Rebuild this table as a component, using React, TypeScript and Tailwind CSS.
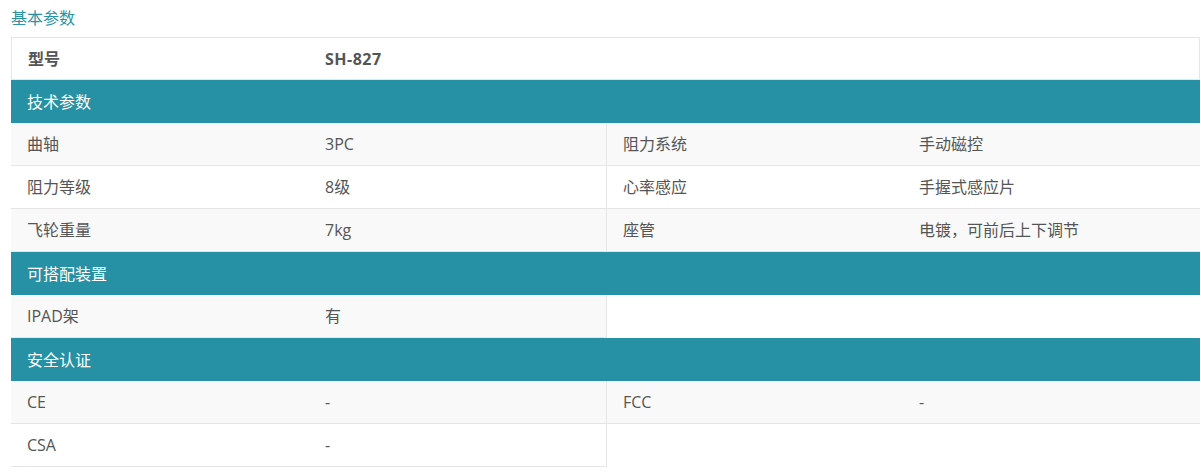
import React from "react";

type Cell = { label: string; value: string } | null;

const font = { fontFamily: '"Open Sans", "Noto Sans CJK SC", sans-serif' };

function Half({ cell, side, bg }: { cell: Cell; side: "l" | "r"; bg: string }) {
  if (!cell) {
    return <div className={side === "l" ? "h-[43px] border-r border-b border-[#e6e6e6] bg-white" : "h-[43px] bg-white"} />;
  }
  return (
    <div
      className={
        (side === "l" ? "border-r " : "") +
        "h-[43px] border-b border-[#e6e6e6] flex items-center " +
        bg
      }
    >
      <div className={(side === "l" ? "w-[298px]" : "w-[296px]") + " pl-4 shrink-0"}>{cell.label}</div>
      <div className="pl-4">{cell.value}</div>
    </div>
  );
}

function Row({ l, r, bg }: { l: Cell; r: Cell; bg: string }) {
  return (
    <div className="grid grid-cols-[596px_593px]">
      <Half cell={l} side="l" bg={bg} />
      {r ? <Half cell={r} side="r" bg={bg} /> : <div className="h-[43px] bg-white" />}
    </div>
  );
}

function Header({ title }: { title: string }) {
  return <div className="h-[43px] bg-[#2690a4] text-white flex items-center pl-4">{title}</div>;
}

export default function App() {
  return (
    <div className="bg-white min-h-[476px] text-[16px] text-[#555]" style={font}>
      <div className="pl-[11px] w-[1200px]">
        <div className="h-[37px] flex items-center text-[#2b93a6] pb-[1px]">基本参数</div>
        <div className="h-[43px] border border-[#e6e6e6] flex items-center font-bold text-[#555]">
          <div className="w-[297px] pl-4 shrink-0">型号</div>
          <div className="pl-4 tracking-[0.5px]">SH-827</div>
        </div>
        <Header title="技术参数" />
        <Row l={{ label: "曲轴", value: "3PC" }} r={{ label: "阻力系统", value: "手动磁控" }} bg="bg-[#f9f9f9]" />
        <Row l={{ label: "阻力等级", value: "8级" }} r={{ label: "心率感应", value: "手握式感应片" }} bg="bg-white" />
        <Row l={{ label: "飞轮重量", value: "7kg" }} r={{ label: "座管", value: "电镀，可前后上下调节" }} bg="bg-[#f9f9f9]" />
        <Header title="可搭配装置" />
        <Row l={{ label: "IPAD架", value: "有" }} r={null} bg="bg-[#f9f9f9]" />
        <Header title="安全认证" />
        <Row l={{ label: "CE", value: "-" }} r={{ label: "FCC", value: "-" }} bg="bg-[#f9f9f9]" />
        <Row l={{ label: "CSA", value: "-" }} r={null} bg="bg-white" />
      </div>
    </div>
  );
}
